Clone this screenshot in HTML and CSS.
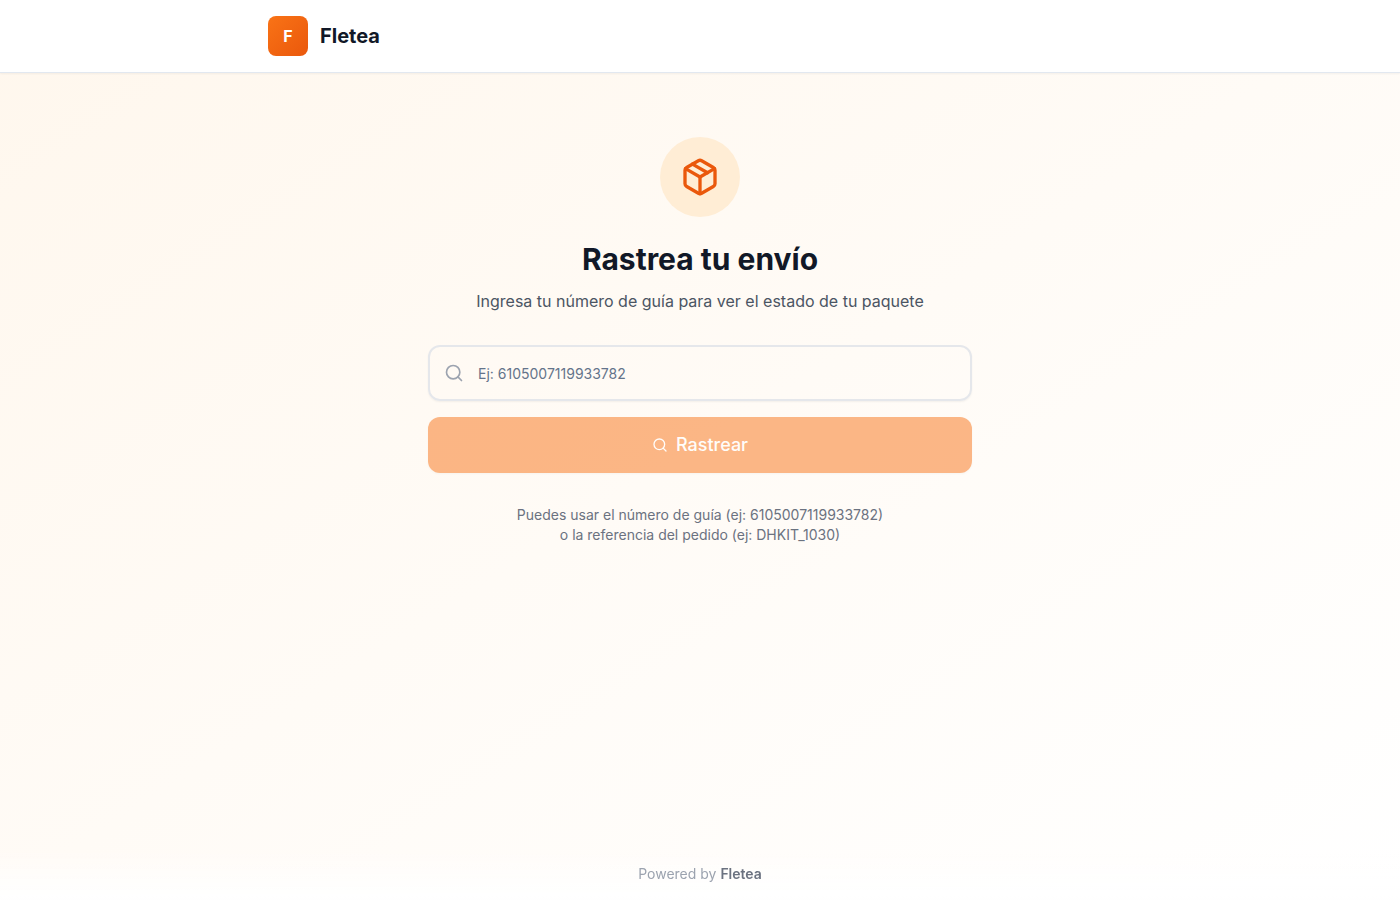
FILE: index.html
```html
<!DOCTYPE html>
<html lang="es">
<head>
    <meta charset="UTF-8" />
    <meta name="viewport" content="width=device-width, initial-scale=1.0" />
    <title>Fletea - Rastrea tu envío</title>
    <link rel="stylesheet" href="styles.css">
</head>
<body>
    <header class="header">
      <div class="header-inner">
        <div class="logo">F</div>
        <span class="brand">Fletea</span>
      </div>
    </header>

    <main class="main">
      <div class="hero-icon">
        <svg width="40" height="40" viewBox="0 0 24 24" fill="none" stroke="currentColor" stroke-width="2" stroke-linecap="round" stroke-linejoin="round">
          <path d="m7.5 4.27 9 5.15" />
          <path d="M21 8a2 2 0 0 0-1-1.73l-7-4a2 2 0 0 0-2 0l-7 4A2 2 0 0 0 3 8v8a2 2 0 0 0 1 1.73l7 4a2 2 0 0 0 2 0l7-4A2 2 0 0 0 21 16Z" />
          <path d="m3.3 7 8.7 5 8.7-5" />
          <path d="M12 22V12" />
        </svg>
      </div>
      <h1 class="title">Rastrea tu envío</h1>
      <p class="subtitle">Ingresa tu número de guía para ver el estado de tu paquete</p>

      <form class="search-form">
        <div class="search-box">
          <svg class="search-icon" width="20" height="20" viewBox="0 0 24 24" fill="none" stroke="currentColor" stroke-width="2" stroke-linecap="round" stroke-linejoin="round">
            <circle cx="11" cy="11" r="8" />
            <path d="m21 21-4.3-4.3" />
          </svg>
          <input class="search-input" type="text" placeholder="Ej: 6105007119933782" aria-label="Número de guía" />
        </div>
        <button class="search-button" type="submit" disabled>
          <svg width="16" height="16" viewBox="0 0 24 24" fill="none" stroke="currentColor" stroke-width="2" stroke-linecap="round" stroke-linejoin="round">
            <circle cx="11" cy="11" r="8" />
            <path d="m21 21-4.3-4.3" />
          </svg>
          Rastrear
        </button>
      </form>

      <p class="help">Puedes usar el número de guía (ej: 6105007119933782)<br>o la referencia del pedido (ej: DHKIT_1030)</p>
    </main>

    <footer class="footer">
      <p>Powered by <span class="footer-brand">Fletea</span></p>
    </footer>
</body>
</html>
```

FILE: styles.css
```css
* {
  margin: 0;
  padding: 0;
  box-sizing: border-box;
}

body {
  font-family: Inter, sans-serif;
  color: #111827;
  min-height: 100vh;
  background: linear-gradient(to bottom right, #fff7ed, #ffffff);
}

.header {
  background: #ffffff;
  border-bottom: 1px solid #e2e8f0;
  box-shadow: 0 1px 2px rgba(0, 0, 0, 0.05);
}

.header-inner {
  display: flex;
  align-items: center;
  gap: 12px;
  max-width: 896px;
  margin: 0 auto;
  padding: 16px;
}

.logo {
  display: flex;
  align-items: center;
  justify-content: center;
  width: 40px;
  height: 40px;
  border-radius: 8px;
  background: linear-gradient(to bottom right, #f97316, #ea580c);
  color: #ffffff;
  font-weight: 700;
}

.brand {
  font-size: 20px;
  line-height: 28px;
  font-weight: 700;
}

.main {
  max-width: 576px;
  margin: 0 auto;
  padding: 64px 16px;
  text-align: center;
}

.hero-icon {
  display: flex;
  align-items: center;
  justify-content: center;
  width: 80px;
  height: 80px;
  margin: 0 auto 24px;
  border-radius: 50%;
  background: #ffedd5;
  color: #ea580c;
}

.title {
  margin-bottom: 12px;
  font-size: 30px;
  line-height: 36px;
  font-weight: 700;
}

.subtitle {
  margin-bottom: 32px;
  color: #4b5563;
  font-size: 16px;
  line-height: 24px;
}

.search-form {
  display: flex;
  flex-direction: column;
  gap: 16px;
}

.search-box {
  position: relative;
}

.search-icon {
  position: absolute;
  top: 18px;
  left: 16px;
  color: #9ca3af;
}

.search-input {
  display: block;
  width: 100%;
  height: 56px;
  padding: 0 16px 0 48px;
  border: 2px solid #e5e7eb;
  border-radius: 12px;
  background: transparent;
  box-shadow: 0 1px 2px rgba(0, 0, 0, 0.05);
  color: #111827;
  font-family: inherit;
  font-size: 14px;
  outline: none;
}

.search-input::placeholder {
  color: #64748b;
}

.search-input:focus {
  border-color: #f97316;
}

.search-button {
  display: flex;
  align-items: center;
  justify-content: center;
  gap: 8px;
  width: 100%;
  height: 56px;
  border: none;
  border-radius: 12px;
  background: #f97316;
  box-shadow: 0 1px 2px rgba(0, 0, 0, 0.05);
  color: #ffffff;
  font-family: inherit;
  font-size: 18px;
  line-height: 28px;
  font-weight: 500;
  cursor: pointer;
}

.search-button:disabled {
  opacity: 0.5;
  cursor: default;
}

.help {
  margin-top: 32px;
  color: #6b7280;
  font-size: 14px;
  line-height: 20px;
}

/* Stays at the bottom of the window */
.footer {
  position: fixed;
  right: 0;
  bottom: 0;
  left: 0;
  padding: 16px;
  background: linear-gradient(to top, #ffffff, transparent);
  color: #9ca3af;
  font-size: 14px;
  line-height: 20px;
  text-align: center;
}

.footer-brand {
  color: #6b7280;
  font-weight: 600;
}
```
